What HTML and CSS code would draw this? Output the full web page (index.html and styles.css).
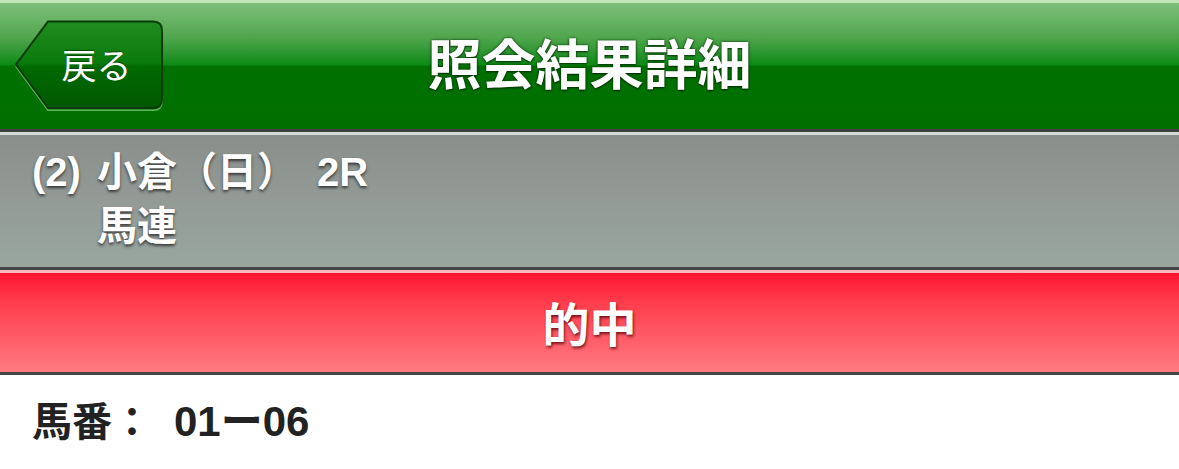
FILE: index.html
```html
<!DOCTYPE html>
<html lang="ja">
<head>
<meta charset="utf-8">
<title>照会結果詳細</title>
<link rel="stylesheet" href="styles.css">
</head>
<body>
<header class="navbar">
  <div class="nav-left">
    <a class="back-btn" href="#">
      <svg class="back-shape" width="151" height="92" viewBox="0 0 151 92" aria-hidden="true">
        <defs>
          <linearGradient id="btnfill" x1="0" y1="0" x2="0" y2="1">
            <stop offset="0" stop-color="#218c21"/>
            <stop offset="0.48" stop-color="#0a7a0c"/>
            <stop offset="0.52" stop-color="#006a00"/>
            <stop offset="1" stop-color="#005800"/>
          </linearGradient>
        </defs>
        <path d="M34,3.5 H139 Q148,3.5 148,12.5 V81 Q148,90 139,90 H34 L2,46.5 Z" fill="none" stroke="#5fb35a" stroke-width="1.5" transform="translate(0,1.2)"/>
        <path d="M34,2.5 H139 Q148,2.5 148,11.5 V80 Q148,89 139,89 H34 L2,45.5 Z" fill="url(#btnfill)" stroke="#0b3a0b" stroke-width="2"/>
      </svg>
      <span class="back-label">戻る</span>
    </a>
  </div>
  <h1 class="nav-title">照会結果詳細</h1>
  <div class="nav-right"></div>
</header>

<section class="race-info">
  <span class="race-no">(2)</span>
  <span class="race-name">小倉（日）<span class="race-round">2R</span></span>
  <span class="race-blank"></span>
  <span class="race-type">馬連</span>
</section>

<section class="result-bar">
  <span class="result-text">的中</span>
</section>

<section class="detail">
  <p class="detail-line">馬番：<span class="detail-value">01ー06</span></p>
</section>
</body>
</html>
```

FILE: styles.css
```css
* {
  box-sizing: border-box;
}

html, body {
  margin: 0;
  padding: 0;
  background: #ffffff;
}

body {
  width: 1179px;
  font-family: "Liberation Sans", "Noto Sans CJK JP", sans-serif;
}

.navbar {
  height: 129px;
  border-top: 3px solid #c2e4b9;
  background: linear-gradient(180deg,
    #7dbe79 0px,
    #6bb567 15px,
    #4fa54c 35px,
    #2c9630 50px,
    #0b8a14 62px,
    #007100 63px,
    #006f00 126px);
  display: grid;
  grid-template-columns: 1fr auto 1fr;
  align-items: center;
}

.nav-left {
  display: flex;
  align-items: center;
  padding-left: 14px;
  padding-bottom: 2px;
}

.back-btn {
  position: relative;
  width: 151px;
  height: 92px;
  display: flex;
  align-items: center;
  justify-content: center;
  text-decoration: none;
}

.back-shape {
  position: absolute;
  left: 0;
  top: 0;
}

.back-label {
  position: relative;
  color: #ffffff;
  font-family: "Noto Sans CJK JP", sans-serif;
  font-weight: 400;
  font-size: 35px;
  line-height: 40px;
  padding-left: 14px;
  padding-bottom: 2px;
  text-shadow: 0 -1px 1px rgba(0, 40, 0, 0.6);
}

.nav-title {
  margin: 0;
  color: #ffffff;
  font-family: "Noto Sans CJK JP", sans-serif;
  font-weight: 700;
  font-size: 54px;
  line-height: 60px;
  padding-bottom: 8px;
  letter-spacing: 0;
  text-shadow: 0 0 3px rgba(0, 50, 0, 0.9), 0 1px 2px rgba(0, 0, 0, 0.6);
}

.race-info {
  border-top: 3px solid #3d3f3d;
  height: 138px;
  background: linear-gradient(180deg,
    #d1dcd8 0px,
    #d1dcd8 3px,
    #8a8e8b 3px,
    #939b97 70px,
    #99a6a0 135px);
  padding: 13px 0 0 32px;
  display: grid;
  grid-template-columns: 65px auto;
  grid-auto-rows: 54px;
  align-content: start;
  justify-content: start;
  color: #ffffff;
  font-weight: 700;
  font-size: 40px;
  line-height: 54px;
  text-shadow: 0 2px 3px rgba(40, 40, 40, 0.85);
}

.race-no,
.race-name,
.race-type {
  white-space: pre;
}

.race-round {
  margin-left: 20px;
}

.result-bar {
  border-top: 3px solid #454545;
  border-bottom: 3px solid #454545;
  height: 108px;
  background: linear-gradient(180deg,
    #ffb6bd 0px,
    #ffb6bd 3px,
    #ff1530 3px,
    #ff3a4a 30px,
    #ff5a66 65px,
    #ff7a80 102px);
  display: flex;
  align-items: center;
  justify-content: center;
}

.result-text {
  color: #ffffff;
  font-family: "Noto Sans CJK JP", sans-serif;
  font-weight: 700;
  font-size: 47px;
  line-height: 56px;
  padding-top: 2px;
  text-shadow: 1px 2px 3px rgba(90, 0, 10, 0.8);
}

.detail {
  padding: 22px 0 0 32px;
}

.detail-line {
  margin: 0;
  color: #222222;
  font-weight: 700;
  font-size: 40px;
  line-height: 50px;
  white-space: pre;
}

.detail-value {
  margin-left: 22px;
  font-size: 42px;
}
```
